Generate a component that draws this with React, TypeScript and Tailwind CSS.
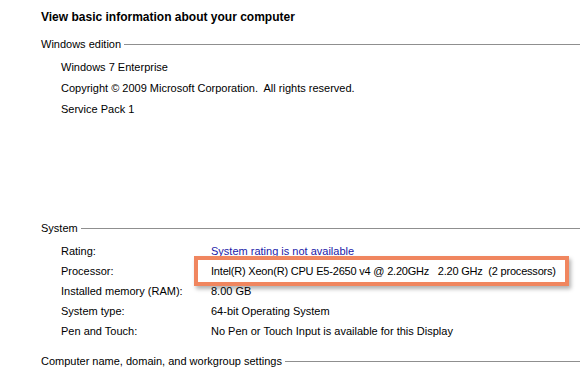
import React from "react";

const font = { fontFamily: '"Liberation Sans", Arial, sans-serif' };

function Header({ title, top }: { title: string; top: string }) {
  return (
    <div className={`flex items-center ${top}`}>
      <span className="leading-[14px] text-[11px] text-black pr-[3px] whitespace-nowrap">{title}</span>
      <div className="flex-1 h-px bg-[#8f8f8f] mt-[1px]" />
    </div>
  );
}

function Row({ label, children, h }: { label: string; children: React.ReactNode; h: string }) {
  return (
    <div className={`flex items-center ${h} text-[11px] text-black whitespace-nowrap`}>
      <div className="w-[170px] shrink-0 pl-[20px]">{label}</div>
      <div className="flex-1">{children}</div>
    </div>
  );
}

export default function App() {
  return (
    <div className="w-[582px] h-[369px] bg-white overflow-hidden pl-[41px] pr-[2px]" style={font}>
      <div className="pt-[10px] h-[26px] text-[12px] font-bold text-black leading-[14px] whitespace-nowrap">
        View basic information about your computer
      </div>
      <Header title="Windows edition" top="mt-[11px]" />
      <div className="pl-[20px] text-[11px] text-black whitespace-nowrap">
        <div className="h-[21px] flex items-center mt-[6px]">Windows 7 Enterprise</div>
        <div className="h-[21px] flex items-center">
          Copyright © 2009 Microsoft Corporation.&nbsp; All rights reserved.
        </div>
        <div className="h-[21px] flex items-center">Service Pack 1</div>
      </div>
      <div className="h-[101px]" />
      <Header title="System" top="" />
      <div className="mt-[6px]">
        <Row label="Rating:" h="h-[20px]">
          <span className="text-[#1a1aa8]">System rating is not available</span>
        </Row>
        <div className="relative">
          <Row label="Processor:" h="h-[20px]">
            <span className="tracking-[-0.2px]">
              Intel(R) Xeon(R) CPU E5-2650 v4 @ 2.20GHz&nbsp;&nbsp; 2.20 GHz&nbsp; (2 processors)
            </span>
          </Row>
          <div className="absolute left-[153px] top-[-5px] w-[375px] h-[30px] border-[4px] border-[#f0865f] shadow-[2px_3px_4px_rgba(0,0,0,0.3)]" />
        </div>
        <Row label="Installed memory (RAM):" h="h-[20px]">8.00 GB</Row>
        <Row label="System type:" h="h-[20px]">64-bit Operating System</Row>
        <Row label="Pen and Touch:" h="h-[21px]">No Pen or Touch Input is available for this Display</Row>
      </div>
      <Header title="Computer name, domain, and workgroup settings" top="mt-[12px]" />
    </div>
  );
}
